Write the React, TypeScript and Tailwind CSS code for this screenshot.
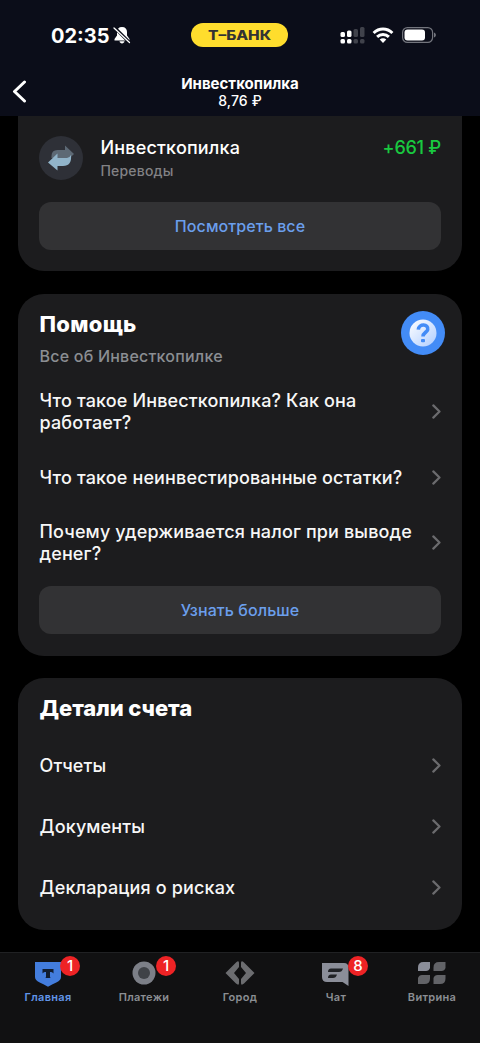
import type { ReactNode } from "react";

function Chevron() {
  return (
    <svg width="9" height="15" viewBox="0 0 9 15" className="-mt-px shrink-0" fill="none" stroke="#6b6b6e" strokeWidth="2.200" strokeLinecap="round" strokeLinejoin="round">
      <path d="M1.300 1.400 7.500 7.500 1.300 13.600" />
    </svg>
  );
}

function Row({ children, className }: { children: ReactNode; className: string }) {
  return (
    <div className={`flex items-center justify-between pl-[0.500px] text-lg font-medium leading-[22px] tracking-[0.140px] text-[#f7f7f7] ${className}`}>
      <div className="whitespace-nowrap">{children}</div>
      <Chevron />
    </div>
  );
}

function Button({ children }: { children: ReactNode }) {
  return (
    <button className="flex h-12 w-full items-center justify-center rounded-xl bg-[#323234] text-base font-medium tracking-[0.080px] text-[#6b9fec]">
      {children}
    </button>
  );
}

function Badge({ children }: { children: ReactNode }) {
  return (
    <span className="absolute top-[2.500px] left-[60px] flex size-5 items-center justify-center rounded-full bg-[#ee2325] pt-px text-[15px] font-medium text-white">
      {children}
    </span>
  );
}

function Tab({ label, active, badge, children }: { label: string; active?: boolean; badge?: string; children: ReactNode }) {
  return (
    <div className="relative flex w-24 flex-col items-center pt-[6px]">
      <svg width="32" height="30" viewBox="0 0 32 30">{children}</svg>
      <span className={`text-[11px] font-semibold leading-4 tracking-[0.300px] ${active ? "text-[#6195e8]" : "text-[#8b8e93]"}`}>{label}</span>
      {badge && <Badge>{badge}</Badge>}
    </div>
  );
}

export default function App() {
  return (
    <div className="flex h-[1043px] w-[480px] flex-col overflow-hidden bg-black font-['Inter','Liberation_Sans',sans-serif] text-white">
      <header className="h-[116px] shrink-0 bg-[#0b0d19]">
        <div className="flex h-[70px] items-center pl-[51px]">
          <span className="w-[60px] pt-px text-[20px] font-bold">02:35</span>
          <svg className="ml-[2px]" width="18" height="18" viewBox="0 0 18 18">
            <path d="M9 1c-3.300 0-5 2-5 5v3.500L1.500 13v1.500h15V13L14 9.500V6c0-3-1.700-5-5-5ZM6.500 15.300h5c-.3 2.800-4.700 2.800-5 0Z" fill="#fff" />
            <path d="m1 1 16 16" stroke="#0b0d19" strokeWidth="3.200" />
            <path d="m1 2 15.500 14.500" stroke="#fff" strokeWidth="1.300" strokeLinecap="round" />
          </svg>
          <div className="ml-[60px] flex h-6 w-[97px] items-center justify-center rounded-full bg-[#ffdd2d] pt-px text-[13px] font-extrabold text-[#333]">
            <span className="scale-x-[1.190]">Т–БАНК</span>
          </div>
          <svg className="ml-[52px]" width="25" height="18" viewBox="0 0 25 18">
            <g fill="#fff"><rect x=".5" y="6" width="4.500" height="5" rx="1.500" /><rect x="7" y="4.500" width="4.500" height="6.500" rx="1.500" /><rect x=".5" y="13" width="4.500" height="4.500" rx="1.500" /><rect x="7" y="13" width="4.500" height="4.500" rx="1.500" /></g>
            <g fill="#40424b"><rect x="13.500" y="3" width="4.500" height="8" rx="1.500" /><rect x="20" y="1" width="4.500" height="10" rx="1.500" /><rect x="13.500" y="13" width="4.500" height="4.500" rx="1.500" /><rect x="20" y="13" width="4.500" height="4.500" rx="1.500" /></g>
          </svg>
          <svg className="ml-[7px]" width="22" height="18" viewBox="0 0 22 18" fill="none" stroke="#fff">
            <path d="M1.600 7C7 1.700 15 1.700 20.400 7" strokeWidth="3" />
            <path d="M5.100 10.900c3.300-3.200 8.500-3.200 11.800 0" strokeWidth="2.900" />
            <path d="M7.700 13.500c1.900-1.700 4.700-1.700 6.600 0L11 16.900Z" fill="#fff" stroke="none" />
          </svg>
          <svg className="ml-[8px]" width="34" height="18" viewBox="0 0 34 18">
            <rect x=".6" y="1.600" width="30" height="14.800" rx="4.800" fill="none" stroke="#73757d" strokeWidth="1.200" />
            <rect x="2.500" y="3.500" width="20.500" height="11" rx="3" fill="#fff" />
            <path d="M32 6.500c2.500 1 2.500 4 0 5Z" fill="#73757d" />
          </svg>
        </div>
        <div className="relative flex flex-col items-center pt-[5px]">
          <svg className="absolute top-[10px] left-3" width="15" height="24" viewBox="0 0 15 24" fill="none" stroke="#fff" strokeWidth="3" strokeLinecap="round" strokeLinejoin="round">
            <path d="M12.500 2 2.500 11.500 12.500 21" />
          </svg>
          <span className="text-[15px] font-bold leading-[18px]">Инвесткопилка</span>
          <span className="text-[14px] font-medium leading-4 tracking-[0.150px]">8,76 ₽</span>
        </div>
      </header>

      <main className="flex h-[836px] shrink-0 flex-col gap-[22px] overflow-hidden px-[18px]">
        <section className="h-[155px] shrink-0 rounded-b-[26px] bg-[#1c1c1e] px-[21px] pt-5">
          <div className="flex h-11 items-start">
            <svg width="44" height="44" viewBox="0 0 44 44">
              <circle cx="22" cy="22" r="22" fill="#2e3037" />
              <path d="M12.500 22v-2q0-6 6-6H26V9.500l9 8.500-9 8.500V22Z" fill="#5d6975" />
              <path d="m9 26.500 9.500-9V22H28q2.500 0 4-3 1 11-8 11h-5.500v4.500Z" fill="#91b4ca" />
            </svg>
            <div className="ml-[17.500px] flex-1">
              <div className="text-lg font-medium leading-[23px] tracking-[0.180px]">Инвесткопилка</div>
              <div className="mt-[2px] text-sm leading-5 font-medium tracking-[0.180px] text-[#828285]">Переводы</div>
            </div>
            <div className="text-lg font-medium leading-[23px] tracking-[-0.240px] text-[#19c940]">+661 ₽</div>
          </div>
          <div className="mt-[22px]"><Button>Посмотреть все</Button></div>
        </section>

        <section className="mt-px h-[362px] shrink-0 rounded-[26px] bg-[#1c1c1e] px-[21px] pt-4">
          <div className="flex h-[58px] justify-between">
            <div className="pl-[0.500px]">
              <h2 className="text-[22px] font-extrabold leading-7 tracking-[0.300px]">Помощь</h2>
              <p className="mt-2 text-base leading-5 font-medium tracking-[0.220px] text-[#8b8e93]">Все об Инвесткопилке</p>
            </div>
            <svg className="-mr-[4px] mt-px" width="44" height="44" viewBox="0 0 44 44">
              <defs><linearGradient id="help" x2="1" y2="1"><stop stopColor="#fff" /><stop offset="1" stopColor="#aecdff" /></linearGradient></defs>
              <circle cx="22" cy="22" r="22" fill="#438cf7" />
              <circle cx="22" cy="22" r="13.500" fill="url(#help)" />
              <path d="M17.300 18.600c.6-6.400 10.500-5.700 9.400 0-.5 2.700-4.700 3-4.700 7" fill="none" stroke="#438cf7" strokeWidth="3.600" />
              <rect x="20" y="28" width="4" height="3.300" rx="1" fill="#438cf7" />
            </svg>
          </div>
          <Row className="mt-[22px] h-11">Что такое Инвесткопилка? Как она<br />работает?</Row>
          <Row className="mt-[33px] h-[22px]">Что такое неинвестированные остатки?</Row>
          <Row className="mt-8 h-11">Почему удерживается налог при выводе<br />денег?</Row>
          <div className="mt-[21px]"><Button>Узнать больше</Button></div>
        </section>

        <section className="h-[252px] shrink-0 rounded-[26px] bg-[#1c1c1e] px-[21px] pt-4">
          <h2 className="pl-[0.500px] text-[22px] font-extrabold leading-7 tracking-[-0.060px]">Детали счета</h2>
          <Row className="mt-[33px] h-[22px]">Отчеты</Row>
          <Row className="mt-[39px] h-[22px]">Документы</Row>
          <Row className="mt-[39px] h-[22px]">Декларация о рисках</Row>
        </section>
      </main>

      <nav className="flex h-[91px] shrink-0 border-t border-[#202123] bg-[#111112]">
        <Tab label="Главная" active badge="1">
          <path d="M3 3h26v15c0 5-7 6-13 9.800C10 24 3 23 3 18Z" fill="#437ddd" />
          <path d="M10.500 10h11v4.500c-1-1.500-2-1.500-3.500-1.500v4.500c0 1 .5 1.500 1.500 1.500h-7c1 0 1.500-.5 1.500-1.500V13c-1.500 0-2.500 0-3.500 1.500Z" fill="#111d30" />
        </Tab>
        <Tab label="Платежи" badge="1">
          <circle cx="16" cy="14" r="11.500" fill="#7c7f87" /><circle cx="16" cy="14" r="6" fill="#3f4247" />
        </Tab>
        <Tab label="Город">
          <path d="M12 3.500Q15 1 15 4v4l-5 6 5 6v4q0 3-3 .5L1.500 14Z" fill="#6c6d70" />
          <path d="M20 3.500Q17 1 17 4v4l5 6-5 6v4q0 3 3 .5L30.500 14Z" fill="#6c6d70" />
        </Tab>
        <Tab label="Чат" badge="8">
          <path d="M2 4h22q4.500 0 4.500 5v18l-6-4H7q-5 0-5-5Z" fill="#8b8e99" />
          <path d="M11 9.500h12q-1 3.500-4 3.500H8q0-3.500 3-3.500Zm0 6h6q-1 3.500-4 3.500H8q0-3.500 3-3.500Z" fill="#202226" />
        </Tab>
        <Tab label="Витрина">
          <path d="M7.500 3H14v6q-1 3-4 3H2V8.500Q2 3 7.500 3Z" fill="#8b8e99" />
          <path d="M23 3h6.500v6q-1 3-4 3h-8V8.500Q17.500 3 23 3ZM6 16h8v3.500q0 5.500-5.500 5.500H2v-6q1-3 4-3Zm15.500 0h8v3.500Q29.500 25 24 25h-6.500v-6q1-3 4-3Z" fill="#626367" />
        </Tab>
      </nav>
    </div>
  );
}
